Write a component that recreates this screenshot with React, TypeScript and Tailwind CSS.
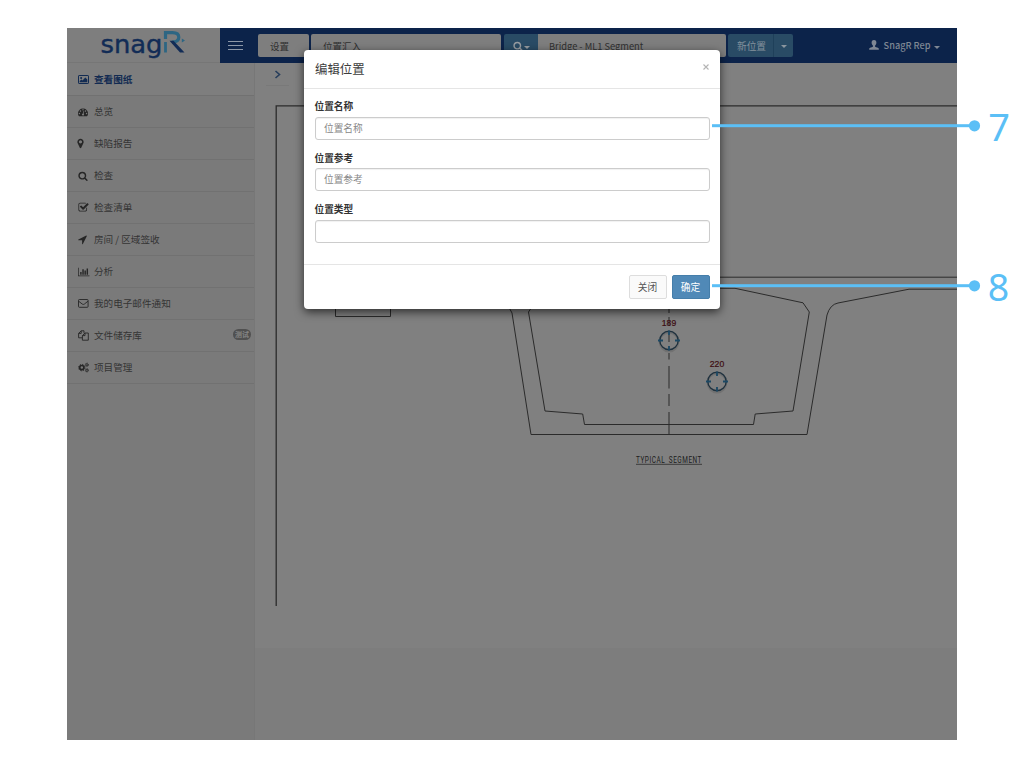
import React from "react";

const FONT = "font-['Noto_Sans_CJK_SC','Noto_Sans',sans-serif]";

function Glyph({ d, w = 1792, className }: { d: string; w?: number; className: string }) {
  return (
    <svg viewBox={`0 0 ${w} 1792`} className={className} fill="currentColor">
      <path d={d} />
    </svg>
  );
}

const SEARCH =
  "M1216 832q0-185-131.5-316.5t-316.5-131.5-316.5 131.5-131.5 316.5 131.5 316.5 316.5 131.5 316.5-131.5 131.5-316.5zm512 832q0 52-38 90t-90 38q-54 0-90-38l-343-342q-179 124-399 124-143 0-273.5-55.5t-225-150-150-225-55.5-273.5 55.5-273.5 150-225 225-150 273.5-55.5 273.5 55.5 225 150 150 225 55.5 273.5q0 220-124 399l343 343q37 37 37 90z";
const GAUGE =
  "M384 1152q0-53-37.5-90.5t-90.5-37.5-90.5 37.5-37.5 90.5 37.5 90.5 90.5 37.5 90.5-37.5 37.5-90.5zm192-448q0-53-37.5-90.5t-90.5-37.5-90.5 37.5-37.5 90.5 37.5 90.5 90.5 37.5 90.5-37.5 37.5-90.5zm428 481l101-382q6-26-7.5-48.5t-38.5-29.5-48 6.5-30 39.5l-101 382q-60 5-107 43.5t-63 98.5q-20 77 20 146t117 89 146-20 89-117q16-60-6-117t-72-91zm660-33q0-53-37.5-90.5t-90.5-37.5-90.5 37.5-37.5 90.5 37.5 90.5 90.5 37.5 90.5-37.5 37.5-90.5zm-640-640q0-53-37.5-90.5t-90.5-37.5-90.5 37.5-37.5 90.5 37.5 90.5 90.5 37.5 90.5-37.5 37.5-90.5zm448 192q0-53-37.5-90.5t-90.5-37.5-90.5 37.5-37.5 90.5 37.5 90.5 90.5 37.5 90.5-37.5 37.5-90.5zm320 448q0 261-141 483-19 29-54 29h-1402q-35 0-54-29-141-221-141-483 0-182 71-348t191-286 286-191 348-71 348 71 286 191 191 286 71 348z";
const MARKER =
  "M1152 640q0-106-75-181t-181-75-181 75-75 181 75 181 181 75 181-75 75-181zm256 0q0 109-33 179l-364 774q-16 33-47.5 52t-67.5 19-67.5-19-46.5-52l-365-774q-33-70-33-179 0-212 150-362t362-150 362 150 150 362z";
const CHECK =
  "M1472 930v318q0 119-84.5 203.5t-203.5 84.5h-832q-119 0-203.5-84.5t-84.5-203.5v-832q0-119 84.5-203.5t203.5-84.5h832q63 0 117 25 15 7 18 23 3 17-9 29l-49 49q-10 10-23 10-3 0-9-2-23-6-45-6h-832q-66 0-113 47t-47 113v832q0 66 47 113t113 47h832q66 0 113-47t47-113v-254q0-13 9-22l64-64q10-10 23-10 6 0 12 3 20 8 20 29zm231-489l-814 814q-24 24-57 24t-57-24l-430-430q-24-24-24-57t24-57l110-110q24-24 57-24t57 24l263 263 647-647q24-24 57-24t57 24l110 110q24 24 24 57t-24 57z";
const ARROW =
  "M1593 349l-640 1280q-17 35-57 35-5 0-15-2-22-5-35.5-22.5t-13.5-39.5v-576h-576q-22 0-39.5-13.5t-22.5-35.5 4-42 29-30l1280-640q13-7 29-7 27 0 45 19 15 14 18.5 34.5t-6.5 39.5z";
const CHART =
  "M640 896v512h-256v-512h256zm384-512v1024h-256v-1024h256zm1024 1152v128h-2048v-1536h128v1408h1920zm-640-896v768h-256v-768h256zm384-384v1152h-256v-1152h256z";

const PictureIcon = () => (
  <svg viewBox="0 0 11 9" className="h-[9px] w-[11px]">
    <rect x="0.5" y="0.5" width="10" height="8" rx="0.6" fill="none" stroke="currentColor" />
    <circle cx="3.1" cy="2.9" r="1" fill="currentColor" />
    <path d="M1.7 7.3V6L3.5 4.4l1 1L7.3 2.6l2 2v2.7z" fill="currentColor" />
  </svg>
);

const MailIcon = () => (
  <svg viewBox="0 0 11 9" className="h-[9px] w-[11px]" fill="none" stroke="currentColor" strokeWidth="0.9">
    <rect x="0.5" y="0.5" width="9.6" height="7.8" rx="0.9" />
    <path d="M0.6 2.2L4.3 5.1Q5.3 5.8 6.3 5.1L10 2.2" />
  </svg>
);

const FilesIcon = () => (
  <svg viewBox="0 0 11 11" className="size-[11px]" fill="none" stroke="currentColor" strokeWidth="0.9" strokeLinejoin="round">
    <path d="M4.4 7.8H0.6V3.4L3.2 0.8H6V3.2M3.2 0.8V3.4H0.6" />
    <path d="M4.4 5.6L7 3h3.3v7.2H4.4zM7 3v2.6H4.4" />
  </svg>
);

const CogsIcon = () => (
  <svg viewBox="0 0 11 11" className="size-[11px]" fill="none" stroke="currentColor">
    <circle cx="3.8" cy="5.6" r="2.1" strokeWidth="1.7" />
    <circle cx="3.8" cy="5.6" r="3.2" strokeWidth="1" strokeDasharray="1.26 1.253" />
    <circle cx="8.9" cy="2.8" r="1.1" strokeWidth="0.9" />
    <circle cx="8.9" cy="2.8" r="1.8" strokeWidth="0.6" strokeDasharray="0.95 0.935" />
    <circle cx="8.9" cy="8.3" r="1.1" strokeWidth="0.9" />
    <circle cx="8.9" cy="8.3" r="1.8" strokeWidth="0.6" strokeDasharray="0.95 0.935" />
  </svg>
);

const items: { label: string; icon: React.ReactNode; badge?: string }[] = [
  { label: "查看图纸", icon: <PictureIcon /> },
  { label: "总览", icon: <Glyph d={GAUGE} className="size-[10px]" /> },
  { label: "缺陷报告", icon: <Glyph d={MARKER} className="-ml-[3px] size-[11px]" /> },
  { label: "检查", icon: <Glyph d={SEARCH} className="size-[10px]" /> },
  { label: "检查清单", icon: <Glyph d={CHECK} className="-ml-[0.5px] size-[11px]" /> },
  { label: "房间 / 区域签收", icon: <Glyph d={ARROW} className="-ml-px size-[11px]" /> },
  { label: "分析", icon: <Glyph d={CHART} w={2048} className="h-[10px] w-[11.5px]" /> },
  { label: "我的电子邮件通知", icon: <MailIcon /> },
  { label: "文件储存库", icon: <FilesIcon />, badge: "测试" },
  { label: "项目管理", icon: <CogsIcon /> },
];

function Caret() {
  return (
    <svg viewBox="0 0 6 3" className="mt-[2px] h-[3px] w-[6px]" fill="currentColor">
      <path d="M0 0h6L3 3z" />
    </svg>
  );
}

function Logo() {
  return (
    <div className="flex h-[35px] w-[153px] shrink-0 border-b border-[#767676] bg-[#7e7e7e] pl-[33px]">
      <svg viewBox="0 0 88 34" className="h-[34px] w-[88px] overflow-visible">
        <text
          x="0.5"
          y="25"
          fill="#122c56"
          stroke="#122c56"
          strokeWidth="0.4"
          fontFamily="DejaVu Sans, sans-serif"
          fontSize="25"
          textLength="62"
          lengthAdjust="spacingAndGlyphs"
        >
          snag
        </text>
        <path d="M65.500 24.500V14" fill="none" stroke="#2d6683" strokeWidth="2.800" />
        <path d="M65.500 11V4.600h7q6.300 0 6.300 4.600T72 14.200" fill="none" stroke="#2d6683" strokeWidth="3.200" />
        <path d="M69.500 12.800h4L84.500 24.600h-4.500z" fill="#122c56" />
        <path d="M81.800 10.500l3.200 2-3.200 2z" fill="#2d6683" />
      </svg>
    </div>
  );
}

function TopBar() {
  return (
    <header className="flex h-[35px] shrink-0 bg-[#0c234a]">
      <Logo />
      <div className="flex grow items-start pt-[6px] text-[9.5px] text-[#303030]">
        <div className="flex h-[23px] w-[38px] flex-col justify-center gap-[3px] pl-[8px]">
          <i className="h-px w-[15px] bg-[#8c97a8]" />
          <i className="h-px w-[15px] bg-[#8c97a8]" />
          <i className="h-px w-[15px] bg-[#8c97a8]" />
        </div>
        <div className="flex h-[23px] w-[51px] items-center rounded-[2px] bg-[#7e7e7e] pt-px pl-[12px]">设置</div>
        <div className="ml-[2px] flex h-[23px] w-[190px] items-center rounded-[2px] bg-[#7e7e7e] pt-px pl-[12px]">位置汇入</div>
        <div className="ml-[3px] flex h-[23px] w-[34px] items-center justify-center gap-px rounded-l-[2px] bg-[#294b65] pt-px text-[#969ba0]">
          <Glyph d={SEARCH} className="size-[10px]" />
          <Caret />
        </div>
        <div className="flex h-[23px] w-[188px] items-center rounded-r-[2px] bg-[#7e7e7e] pt-[2px] pl-[11px] text-[9.3px]">
          Bridge - ML1 Segment
        </div>
        <div className="ml-[2px] flex h-[23px] w-[46px] items-center justify-center rounded-l-[2px] border-r border-[#1f405a] bg-[#294b65] pt-px pl-[2px] text-[9.7px] text-[#84919c]">
          新位置
        </div>
        <div className="flex h-[23px] w-[19px] items-center justify-center rounded-r-[2px] bg-[#294b65] text-[#8b969f]">
          <Caret />
        </div>
        <div className="ml-auto flex h-[23px] items-center pt-px pr-[17.5px] text-[9.2px] text-[#7f8794]">
          <svg viewBox="0 0 10 10" className="mr-[5px] mb-[2px] size-[10px]" fill="currentColor">
            <path d="M5 0C3.300 0 2.500 1.200 2.600 2.800 2.700 4.200 3.300 5 3.900 5.600V6.700C2.800 7.300 0.500 7.800 0.200 8.600V9.700H9.800V8.600C9.500 7.800 7.200 7.300 6.100 6.700V5.600C6.700 5 7.300 4.200 7.400 2.800 7.500 1.200 6.700 0 5 0z" />
          </svg>
          <span className="mr-[3px] font-medium">SnagR Rep</span>
          <Caret />
        </div>
      </div>
    </header>
  );
}

function Sidebar() {
  return (
    <aside className="w-[188px] shrink-0 border-r border-[#777777] bg-[#7a7a7a]">
      <ul>
        {items.map((it, i) => (
          <li
            key={it.label}
            className={
              i === 0
                ? "flex h-[33px] items-center border-b border-[#717171] bg-[#7e7e7e] pl-[11px] text-[9.6px] font-bold text-[#122b52]"
                : "flex h-[32px] items-center border-b border-[#717171] pl-[11px] text-[9.6px] text-[#343434]"
            }
          >
            <span className={i === 0 ? "flex w-[16px] shrink-0 items-center" : "flex w-[16px] shrink-0 items-center text-[#262626]"}>
              {it.icon}
            </span>
            <span className="whitespace-pre">{it.label}</span>
            {it.badge && (
              <span className="mr-[3px] mb-[3px] ml-auto flex h-[11px] w-[18px] items-center justify-center rounded-full bg-[#505050] text-[7px] leading-[11px] font-bold whitespace-nowrap text-[#858585]">
                {it.badge}
              </span>
            )}
          </li>
        ))}
      </ul>
    </aside>
  );
}

function Pin({ x, y, label }: { x: number; y: number; label: string }) {
  return (
    <g>
      <ellipse cx={x} cy={y + 1.7} rx="9.4" ry="9.4" fill="none" stroke="#727272" strokeWidth="1.8" />
      <circle cx={x} cy={y} r="9.2" fill="none" stroke="#20323f" strokeWidth="1.4" />
      <path
        d={`M${x - 11} ${y}h5M${x + 6} ${y}h5M${x} ${y - 10}v4.500M${x} ${y + 5.500}v4.500`}
        stroke="#1b4864"
        strokeWidth="1.800"
      />
      <text x={x} y={y - 14.5} textAnchor="middle" fontSize="8.6" fontFamily="Liberation Sans, sans-serif" fill="#3d0d11" stroke="#3d0d11" strokeWidth="0.2">
        {label}
      </text>
    </g>
  );
}

function Drawing() {
  return (
    <svg viewBox="255 63 702 677" className="h-[677px] w-[702px]">
      <rect x="255" y="63" width="702" height="677" fill="#808080" />
      <rect x="255" y="648" width="702" height="92" fill="#7d7d7d" />
      <path d="M266 85.500h23" stroke="#797979" strokeWidth="1" />
      <path d="M275.500 71l4 3.500-4 3.500" fill="none" stroke="#263d5b" strokeWidth="1.600" />
      <g fill="none" stroke="#2b2b2b" strokeWidth="1">
        <path d="M276.200 606V105.800H957" strokeWidth="1.300" />
        <path d="M335.500 280V316.500H390.500V280" />
        <path d="M380 277.200H957" />
        <path d="M505 300L512 313L531 434.500H807L827 315Q830 304.500 838 303L909 289.200H957" />
        <path d="M700 288.300H735L803 302.800L809.300 312L793 411L755.200 414L753.500 424.500H584.500L582.700 414L545 411L528.500 312L534 304" />
        <path d="M669 303v10M669 317v9M669 335v7M669 353v6.500M669 366v22.500M669 394v12M669 412v22.500" />
      </g>
      <Pin x={669} y={340.5} label="189" />
      <Pin x={717} y={381.5} label="220" />
      <text
        x="636"
        y="462.500"
        fontSize="8.300"
        fontFamily="Roboto, sans-serif"
        fill="#1c1c1c"
        textLength="66"
        lengthAdjust="spacingAndGlyphs"
        letterSpacing="0.700"
        wordSpacing="2"
      >
        TYPICAL SEGMENT
      </text>
      <path d="M636 464.300H702" stroke="#333333" strokeWidth="0.900" />
    </svg>
  );
}

function Field({ label, placeholder }: { label: string; placeholder?: string }) {
  return (
    <label className="mb-[10.5px] block">
      <span className="flex h-[16px] items-center text-[9.7px] font-bold text-[#333333]">{label}</span>
      <span className="mt-[2px] box-border flex h-[23px] w-full items-center rounded-[3px] border border-[#cccccc] pl-[8.5px] text-[9.7px] text-[#888888] shadow-[inset_0_1px_1px_rgba(0,0,0,0.06)]">
        {placeholder}
      </span>
    </label>
  );
}

function Dialog() {
  return (
    <section className="absolute top-[50px] left-[304px] flex h-[259px] w-[416px] flex-col rounded-[4px] bg-white shadow-[0_3px_10px_rgba(0,0,0,0.65)]">
      <div className="flex h-[39px] shrink-0 items-center justify-between border-b border-[#e5e5e5] px-[11px]">
        <h2 className="text-[12.4px] text-[#3c3c3c]">编辑位置</h2>
        <svg viewBox="0 0 6 6" className="mb-[5px] size-[6px]" stroke="#b4b4b4" strokeWidth="1.1">
          <path d="M0.500 0.500l5 5M5.500 0.500l-5 5" />
        </svg>
      </div>
      <div className="grow px-[10.5px] pt-[9.5px]">
        <Field label="位置名称" placeholder="位置名称" />
        <Field label="位置参考" placeholder="位置参考" />
        <Field label="位置类型" />
      </div>
      <div className="flex h-[45px] shrink-0 items-start justify-end gap-[5px] border-t border-[#e5e5e5] pt-[10px] pr-[10.5px] text-[9.7px]">
        <button className="h-[24px] w-[38px] rounded-[2px] border border-[#dddddd] bg-[#fafafa] text-[#555555]">关闭</button>
        <button className="h-[24px] w-[38px] rounded-[2px] border border-[#457eaa] bg-[#5089b7] text-white">确定</button>
      </div>
    </section>
  );
}

function Callouts() {
  return (
    <svg viewBox="0 0 1024 768" className="pointer-events-none absolute inset-0 h-[768px] w-[1024px]">
      <g fill="#5bbff6">
        <rect x="712" y="124.200" width="263" height="3" />
        <circle cx="974.500" cy="125.800" r="5.600" />
        <rect x="712" y="284.200" width="263" height="3" />
        <circle cx="974.500" cy="285.800" r="5.600" />
        <text x="999" y="141" textAnchor="middle" fontSize="38" fontFamily="Noto Sans, sans-serif">
          7
        </text>
        <text x="998.500" y="301" textAnchor="middle" fontSize="37.500" fontFamily="Noto Sans, sans-serif">
          8
        </text>
      </g>
    </svg>
  );
}

export default function App() {
  return (
    <div className={`relative h-[768px] w-[1024px] overflow-hidden bg-white pt-[28px] pl-[67px] ${FONT}`}>
      <div className="flex h-[712px] w-[890px] flex-col overflow-hidden">
        <TopBar />
        <div className="flex grow">
          <Sidebar />
          <main className="w-[702px] shrink-0">
            <Drawing />
          </main>
        </div>
      </div>
      <Dialog />
      <Callouts />
    </div>
  );
}
